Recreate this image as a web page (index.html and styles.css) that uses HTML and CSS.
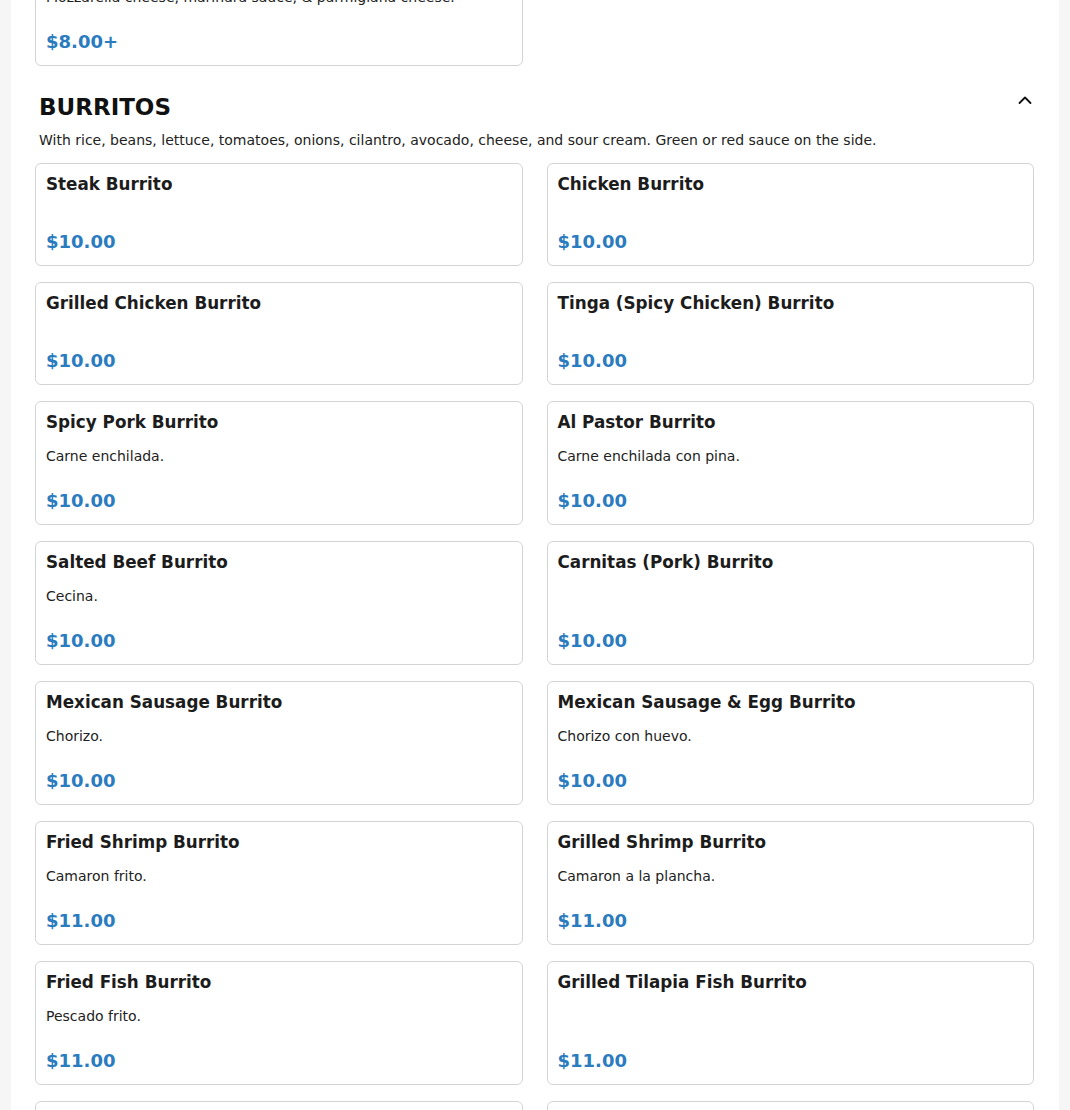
FILE: index.html
```html
<!DOCTYPE html>
<html lang="en">
<head>
<meta charset="utf-8">
<title>Menu</title>
<link rel="stylesheet" href="styles.css">
</head>
<body>
<main class="panel">
  <section class="category category-prev">
    <div class="grid">
      <article class="item">
        <h3 class="item-name">Eggplant Parmigiana</h3>
        <p class="item-desc">Mozzarella cheese, marinara sauce, &amp; parmigiana cheese.</p>
        <div class="item-price">$8.00+</div>
      </article>
    </div>
  </section>

  <section class="category">
    <header class="cat-head">
      <h2 class="cat-title">BURRITOS</h2>
      <button class="toggle" aria-label="Collapse">
        <svg width="16" height="16" viewBox="0 0 16 16"><path d="M2.5 11 L8 5.5 L13.5 11" fill="none" stroke="#111" stroke-width="1.8" stroke-linecap="round" stroke-linejoin="round"/></svg>
      </button>
    </header>
    <p class="cat-desc">With rice, beans, lettuce, tomatoes, onions, cilantro, avocado, cheese, and sour cream. Green or red sauce on the side.</p>
    <div class="grid">
      <article class="item"><h3 class="item-name">Steak Burrito</h3><p class="item-desc"></p><div class="item-price">$10.00</div></article>
      <article class="item"><h3 class="item-name">Chicken Burrito</h3><p class="item-desc"></p><div class="item-price">$10.00</div></article>
      <article class="item"><h3 class="item-name">Grilled Chicken Burrito</h3><p class="item-desc"></p><div class="item-price">$10.00</div></article>
      <article class="item"><h3 class="item-name">Tinga (Spicy Chicken) Burrito</h3><p class="item-desc"></p><div class="item-price">$10.00</div></article>
      <article class="item"><h3 class="item-name">Spicy Pork Burrito</h3><p class="item-desc">Carne enchilada.</p><div class="item-price">$10.00</div></article>
      <article class="item"><h3 class="item-name">Al Pastor Burrito</h3><p class="item-desc">Carne enchilada con pina.</p><div class="item-price">$10.00</div></article>
      <article class="item"><h3 class="item-name">Salted Beef Burrito</h3><p class="item-desc">Cecina.</p><div class="item-price">$10.00</div></article>
      <article class="item"><h3 class="item-name">Carnitas (Pork) Burrito</h3><p class="item-desc"></p><div class="item-price">$10.00</div></article>
      <article class="item"><h3 class="item-name">Mexican Sausage Burrito</h3><p class="item-desc">Chorizo.</p><div class="item-price">$10.00</div></article>
      <article class="item"><h3 class="item-name">Mexican Sausage &amp; Egg Burrito</h3><p class="item-desc">Chorizo con huevo.</p><div class="item-price">$10.00</div></article>
      <article class="item"><h3 class="item-name">Fried Shrimp Burrito</h3><p class="item-desc">Camaron frito.</p><div class="item-price">$11.00</div></article>
      <article class="item"><h3 class="item-name">Grilled Shrimp Burrito</h3><p class="item-desc">Camaron a la plancha.</p><div class="item-price">$11.00</div></article>
      <article class="item"><h3 class="item-name">Fried Fish Burrito</h3><p class="item-desc">Pescado frito.</p><div class="item-price">$11.00</div></article>
      <article class="item"><h3 class="item-name">Grilled Tilapia Fish Burrito</h3><p class="item-desc"></p><div class="item-price">$11.00</div></article>
      <article class="item"><h3 class="item-name">Vegetarian Burrito</h3><p class="item-desc">Rice, beans, and vegetables.</p><div class="item-price">$9.00</div></article>
      <article class="item"><h3 class="item-name">Bean &amp; Cheese Burrito</h3><p class="item-desc"></p><div class="item-price">$8.00</div></article>
    </div>
  </section>
</main>
</body>
</html>
```

FILE: styles.css
```css
* { box-sizing: border-box; }

html, body {
  margin: 0;
  padding: 0;
  background: #f6f6f6;
  font-family: "DejaVu Sans", "Liberation Sans", sans-serif;
  color: #1c1c1c;
}

.panel {
  width: 1048px;
  margin: 0 0 0 11px;
  background: #ffffff;
  padding: 0 25px 40px 24px;
}

.category-prev {
  margin-top: -58px;
}

.category {
  display: flex;
  flex-direction: column;
}

.cat-head {
  display: flex;
  justify-content: space-between;
  align-items: flex-start;
  padding: 0 1px 0 4px;
  margin-top: 26px;
}

.cat-title {
  margin: 2px 0 0;
  font-size: 23px;
  font-weight: bold;
  line-height: 27px;
  color: #111;
}

.toggle {
  border: 0;
  background: transparent;
  padding: 0;
  width: 16px;
  height: 16px;
  display: block;
}

.toggle svg { display: block; }

.cat-desc {
  margin: 9px 0 13px 4px;
  font-size: 14px;
  line-height: 20px;
  color: #222;
}

.grid {
  display: grid;
  grid-template-columns: 1fr 1fr;
  column-gap: 24px;
  row-gap: 16px;
}

.item {
  display: flex;
  flex-direction: column;
  border: 1px solid #d4d4d4;
  border-radius: 6px;
  padding: 7px 10px 10px;
  background: #fff;
}

.item-name {
  margin: 0;
  font-size: 16.8px;
  line-height: 26px;
  font-weight: bold;
  color: #1c1c1c;
}

.item-desc {
  margin: 11px 0 20px;
  font-size: 14px;
  line-height: 21px;
  color: #222;
}

.item-desc:empty { line-height: 0; }

.item-price {
  margin-top: auto;
  font-size: 18px;
  line-height: 27px;
  font-weight: bold;
  color: #2b7bbf;
}
```
